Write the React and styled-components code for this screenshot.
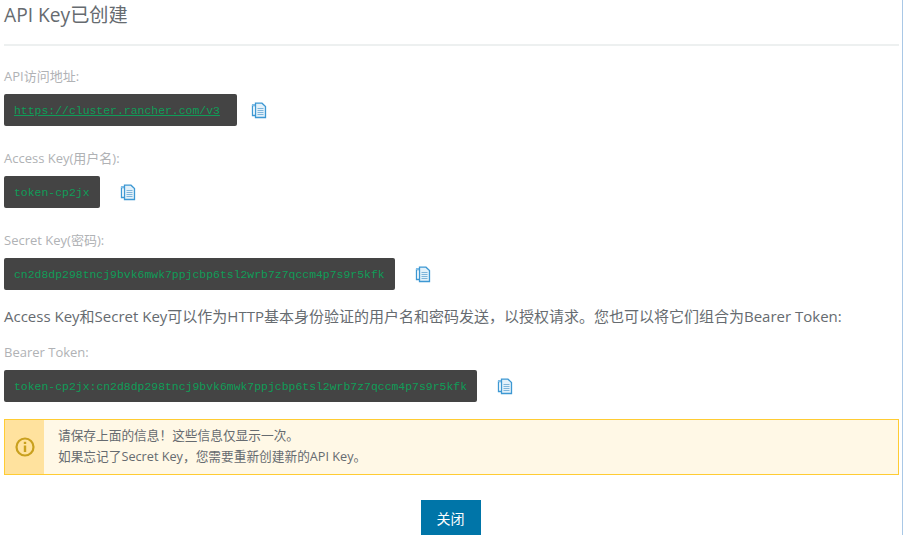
import React from 'react';
import styled, { createGlobalStyle } from 'styled-components';

const GlobalStyle = createGlobalStyle`
  html, body {
    margin: 0;
    padding: 0;
    height: 535px;
    overflow: hidden;
    background: #fff;
  }
`;

const Page = styled.div`
  box-sizing: border-box;
  width: 903px;
  height: 535px;
  overflow: hidden;
  padding: 0 3px 0 4px;
  border-right: 1px solid #a9c8e6;
  font-family: "Open Sans", "Noto Sans CJK SC", sans-serif;
  color: #4a4e52;
`;

const Header = styled.div`
  height: 44px;
  border-bottom: 2px solid #edf0f0;
  margin-bottom: 20px;
`;

const Title = styled.h1`
  margin: 0;
  padding-top: 3px;
  font-size: 19.2px;
  line-height: 24px;
  font-weight: 400;
  color: #666b70;
`;

const Field = styled.div`
  margin-bottom: 22px;
`;

const Label = styled.div`
  font-size: 13px;
  line-height: 20px;
  color: #b0b2b5;
  margin-bottom: 8px;
`;

const Row = styled.div`
  display: flex;
  align-items: center;
  gap: ${props => props.$gap}px;
`;

const Code = styled.code`
  box-sizing: border-box;
  height: 32px;
  padding: 0 10px;
  background: #444444;
  border-radius: 2px;
  font-family: "Liberation Mono", monospace;
  font-size: 11.45px;
  line-height: 33px;
  color: #0f9d58;
  white-space: pre;
`;

const CodeLink = styled.span`
  text-decoration: underline;
`;

const Info = styled.p`
  margin: -7px 0 15px;
  font-size: 15px;
  line-height: 22px;
  color: #666b70;
  white-space: nowrap;
`;

const Banner = styled.div`
  box-sizing: border-box;
  display: flex;
  height: 56px;
  margin-top: -5px;
  border: 1px solid #ffcc33;
  background: #fff8e6;
`;

const BannerIcon = styled.div`
  flex: 0 0 39px;
  display: flex;
  align-items: center;
  justify-content: center;
  background: #ffe29e;
`;

const BannerText = styled.div`
  padding: 5px 14px;
  font-size: 12.7px;
  line-height: 21px;
  color: #666b70;
  white-space: nowrap;
`;

const Footer = styled.div`
  display: flex;
  justify-content: center;
  margin-top: 25px;
  padding-right: 2px;
`;

const Button = styled.button`
  width: 60px;
  height: 36px;
  border: 0;
  padding: 0;
  background: #0075a8;
  color: #fff;
  font-family: inherit;
  font-size: 14px;
`;

function CopyIcon() {
  return (
    <svg width="16" height="17" viewBox="0 0 16 17" fill="none">
      <path d="M6 3.5H1.5V13.5H4.5" stroke="#3d98d3" strokeWidth="1.3" />
      <rect x="1" y="2" width="9" height="2" fill="#7fbde6" />
      <path d="M4.5 1.2H11L14.5 4.5V15.5H4.5Z" fill="#e3f1fa" stroke="#3d98d3" strokeWidth="1.3" />
      <path d="M6.5 6.5H12.5M6.5 8.5H12.5M6.5 10.5H12.5M6.5 12.5H12.5" stroke="#7fb5da" strokeWidth="1" />
    </svg>
  );
}

function WarnIcon() {
  return (
    <svg width="20" height="20" viewBox="0 0 20 20" fill="none">
      <circle cx="10" cy="10" r="8.5" stroke="#c9a01e" strokeWidth="2.2" />
      <rect x="8.8" y="8.5" width="2.4" height="6.5" fill="#c9a01e" />
      <rect x="8.8" y="4.8" width="2.4" height="2.2" fill="#c9a01e" />
    </svg>
  );
}

function CopyField({ label, gap = 20, children }) {
  return (
    <Field>
      <Label>{label}</Label>
      <Row $gap={gap}>
        <Code>{children}</Code>
        <CopyIcon />
      </Row>
    </Field>
  );
}

const accessKey = 'token-cp2jx';
const secretKey = 'cn2d8dp298tncj9bvk6mwk7ppjcbp6tsl2wrb7z7qccm4p7s9r5kfk';

export default function App() {
  return (
    <Page>
      <GlobalStyle />
      <Header>
        <Title>API Key已创建</Title>
      </Header>
      <CopyField label="API访问地址:" gap={14}>
        <CodeLink>https://cluster.rancher.com/v3</CodeLink>{' '}
      </CopyField>
      <CopyField label="Access Key(用户名):">{accessKey}</CopyField>
      <CopyField label="Secret Key(密码):">{secretKey}</CopyField>
      <Info>Access Key和Secret Key可以作为HTTP基本身份验证的用户名和密码发送，以授权请求。您也可以将它们组合为Bearer Token:</Info>
      <CopyField label="Bearer Token:">{accessKey}:{secretKey}</CopyField>
      <Banner>
        <BannerIcon>
          <WarnIcon />
        </BannerIcon>
        <BannerText>
          请保存上面的信息！这些信息仅显示一次。
          <br />
          如果忘记了Secret Key，您需要重新创建新的API Key。
        </BannerText>
      </Banner>
      <Footer>
        <Button>关闭</Button>
      </Footer>
    </Page>
  );
}
